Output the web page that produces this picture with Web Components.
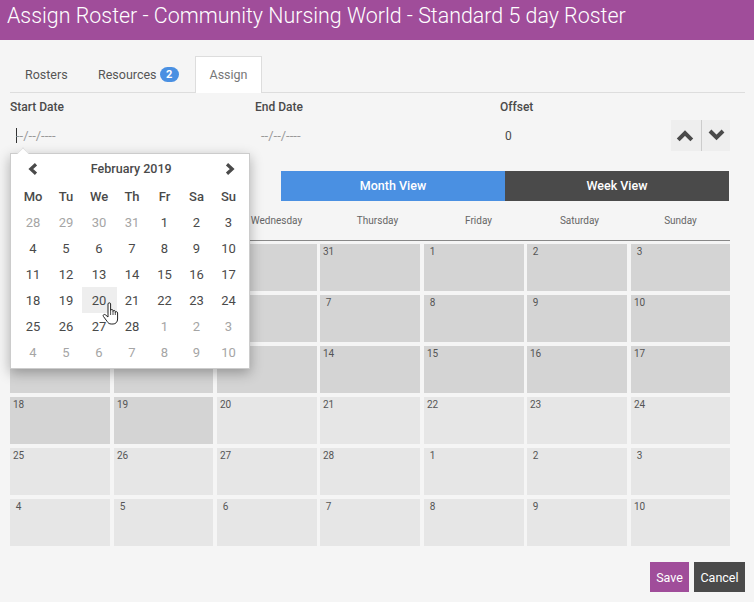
<!DOCTYPE html>
<html>
<head>
<meta charset="utf-8">
<title>Assign Roster</title>
<style>
    html, body { margin: 0; padding: 0; }
    body { background: #f5f5f5; font-family: Roboto, "Liberation Sans", sans-serif; color: #4a4a4a; }
</style>
</head>
<body>
<assign-roster></assign-roster>
<script>
const CHEVRON = {
    left: [10, 12, "8 1.2 2.8 6 8 10.8", 3.2],
    right: [10, 12, "2 1.2 7.2 6 2 10.8", 3.2],
    up: [18, 13, "2.2 10.8 9 4 15.8 10.8", 4],
    down: [17, 12, "2 2 8.5 8.4 15 2", 4]
};

function chevron(name) {
    const [w, h, points, stroke] = CHEVRON[name];
    return `<svg width="${w}" height="${h}" viewBox="0 0 ${w} ${h}" fill="none" stroke="#4a4a4a" stroke-width="${stroke}"><polyline points="${points}"/></svg>`;
}

class RosterHeader extends HTMLElement {
    connectedCallback() {
        this.attachShadow({ mode: "open" }).innerHTML = `
            <style>
                :host {
                    display: flex;
                    align-items: center;
                    box-sizing: border-box;
                    height: 40px;
                    padding: 0 0 9px 7px;
                    background: #a04d9a;
                    color: #fff;
                    font-weight: 300;
                    font-size: 21.4px;
                    white-space: nowrap;
                }
            </style>
            <slot></slot>
        `;
    }
}

class RosterTabs extends HTMLElement {
    connectedCallback() {
        this.attachShadow({ mode: "open" }).innerHTML = `
            <style>
                :host {
                    display: flex;
                    height: 36px;
                    margin: 16px 9px 0 10px;
                    border-bottom: 1px solid #ddd;
                    font-size: 12.5px;
                    color: #555;
                }
                div {
                    display: flex;
                    align-items: center;
                    box-sizing: border-box;
                    height: 37px;
                }
                .rosters { padding-left: 15px; width: 88px; }
                .resources { width: 97px; }
                .badge {
                    display: inline-block;
                    width: 19px;
                    height: 15px;
                    line-height: 15px;
                    margin-left: 3px;
                    border-radius: 8px;
                    background: #4a90e2;
                    color: #fff;
                    font-size: 11px;
                    font-weight: 700;
                    text-align: center;
                }
                .active {
                    justify-content: center;
                    width: 67px;
                    padding-bottom: 1px;
                    background: #fff;
                    border: 1px solid #ddd;
                    border-bottom: none;
                    color: #777;
                }
            </style>
            <div class="rosters">Rosters</div>
            <div class="resources">Resources<span class="badge">2</span></div>
            <div class="active">Assign</div>
        `;
    }
}

class DatePicker extends HTMLElement {
    connectedCallback() {
        const weekdays = ["Mo", "Tu", "We", "Th", "Fr", "Sa", "Su"];
        const days = [
            [28, 1], [29, 1], [30, 1], [31, 1], [1], [2], [3],
            [4], [5], [6], [7], [8], [9], [10],
            [11], [12], [13], [14], [15], [16], [17],
            [18], [19], [20], [21], [22], [23], [24],
            [25], [26], [27], [28], [1, 1], [2, 1], [3, 1],
            [4, 1], [5, 1], [6, 1], [7, 1], [8, 1], [9, 1], [10, 1]
        ];
        const cells = days.map(([n, other], i) =>
            `<span class="${other ? "other" : ""} ${i == 23 ? "hover" : ""}">${n}</span>`).join("");
        this.attachShadow({ mode: "open" }).innerHTML = `
            <style>
                :host {
                    position: absolute;
                    z-index: 5;
                    left: 0;
                    top: 53px;
                    box-sizing: border-box;
                    width: 240px;
                    height: 216px;
                    padding: 0 5px 0 5.5px;
                    background: #fff;
                    border: 1px solid #ccc;
                    box-shadow: 0 4px 12px rgba(0, 0, 0, .3);
                    font-size: 13px;
                    color: #4a4a4a;
                }
                .arrow {
                    position: absolute;
                    left: 7px;
                    top: -6px;
                    width: 9px;
                    height: 9px;
                    background: #fff;
                    border-top: 1px solid #ddd;
                    border-left: 1px solid #ddd;
                    transform: rotate(45deg) scale(.8);
                }
                .head {
                    display: flex;
                    justify-content: space-between;
                    align-items: center;
                    height: 29px;
                    padding: 0 9px 0 11px;
                    font-size: 12.5px;
                    font-weight: 500;
                }
                .head svg { display: block; }
                .grid {
                    display: grid;
                    grid-template-columns: repeat(4, 33px) repeat(3, 32px);
                    grid-auto-rows: 26px;
                    align-items: center;
                    justify-items: center;
                }
                .grid b { font-weight: 500; }
                .grid span {
                    display: flex;
                    align-items: center;
                    justify-content: center;
                    width: 100%;
                    height: 26px;
                }
                .other { color: #a5a5a5; }
                .grid .hover {
                    justify-self: start;
                    box-sizing: border-box;
                    width: 35px;
                    margin-left: -.4px;
                    padding-right: 1px;
                    background: #eee;
                }
                .hand { position: absolute; left: 91px; top: 148px; }
            </style>
            <div class="arrow"></div>
            <div class="head">${chevron("left")}<span>February 2019</span>${chevron("right")}</div>
            <div class="grid">
                ${weekdays.map(d => `<b>${d}</b>`).join("")}
                ${cells}
            </div>
            <svg class="hand" width="19" height="23" viewBox="0 0 19 23" fill="#fff" stroke="#222" stroke-width="1" stroke-linejoin="round">
                <path d="M6 2c0-1.6 2.6-1.6 2.6 0v6.5c0-1.3 2.4-1.3 2.4 0v1c0-1.3 2.3-1.3 2.3 0v1c0-1.2 2.3-1.2 2.3.5V17c0 3-2 5-4.5 5H9.2c-2 0-3.1-1-4-2.5L1.4 14.4c-.9-1.3.8-2.6 2-1.6L6 15z"/>
                <path d="M8.6 8.5V13M11 9.5V13M13.3 10.5V13" fill="none" stroke-width=".8"/>
            </svg>
        `;
    }
}

class DateField extends HTMLElement {
    connectedCallback() {
        const label = this.getAttribute("label");
        const caret = this.hasAttribute("focused");
        this.attachShadow({ mode: "open" }).innerHTML = `
            <style>
                :host {
                    display: block;
                    position: relative;
                    width: 245px;
                }
                label {
                    display: block;
                    height: 14px;
                    line-height: 14px;
                    font-size: 12px;
                    font-weight: 500;
                }
                .value {
                    display: flex;
                    align-items: center;
                    height: 31px;
                    margin-top: 6px;
                    padding-left: 6px;
                    font-size: 13px;
                    color: #999;
                }
                .caret {
                    width: 1px;
                    height: 15px;
                    margin-right: -1px;
                    background: #333;
                }
                .filled { color: #4a4a4a; padding-left: 5px; font-size: 12px; }
            </style>
            <label>${label}</label>
            <div class="value ${this.hasAttribute("filled") ? "filled" : ""}">${caret ? '<i class="caret"></i>' : ""}<slot></slot></div>
            <slot name="popup"></slot>
        `;
    }
}

class OffsetStepper extends HTMLElement {
    connectedCallback() {
        this.attachShadow({ mode: "open" }).innerHTML = `
            <style>
                :host {
                    display: flex;
                    align-self: flex-end;
                    height: 31px;
                    margin-left: -74px;
                    background: #eee;
                }
                div {
                    display: flex;
                    align-items: center;
                    justify-content: center;
                    box-sizing: border-box;
                    width: 29.5px;
                    height: 31px;
                }
                div + div { border-left: 1px solid #ccc; }
                svg { display: block; }
                .up svg { margin-right: 1px; }
                .down svg { margin: -2px 0 0 2px; }
            </style>
            <div class="up">${chevron("up")}</div>
            <div class="down">${chevron("down")}</div>
        `;
    }
}

class ViewSwitch extends HTMLElement {
    connectedCallback() {
        this.attachShadow({ mode: "open" }).innerHTML = `
            <style>
                :host {
                    display: grid;
                    grid-template-columns: 224px 224px;
                    height: 30px;
                    margin: 20px 0 0 281px;
                    color: #fff;
                    font-size: 12.5px;
                    font-weight: 500;
                }
                div {
                    display: flex;
                    align-items: center;
                    justify-content: center;
                    padding-bottom: 1px;
                }
                .month { background: #4a90e2; }
                .week { background: #4a4a4a; }
            </style>
            <div class="month">Month View</div>
            <div class="week">Week View</div>
        `;
    }
}

class MonthGrid extends HTMLElement {
    connectedCallback() {
        // Monday and Tuesday sit behind the open date picker, so they have no label here
        const names = ["", "", "Wednesday", "Thursday", "Friday", "Saturday", "Sunday"];
        // same for the first three cells of the first three rows
        const days = [
            "", "", "", 31, 1, 2, 3,
            "", "", "", 7, 8, 9, 10,
            "", "", "", 14, 15, 16, 17,
            18, 19, 20, 21, 22, 23, 24,
            25, 26, 27, 28, 1, 2, 3,
            4, 5, 6, 7, 8, 9, 10
        ];
        // the gutters in the calendar are not even, 3 or 4px
        const gutters = [4, 4, 3, 4, 3, 4, 0];
        this.attachShadow({ mode: "open" }).innerHTML = `
            <style>
                :host {
                    display: block;
                    width: 720px;
                    margin-left: 10px;
                }
                .names {
                    display: grid;
                    grid-template-columns: repeat(7, 101px);
                    align-items: center;
                    justify-items: center;
                    box-sizing: border-box;
                    height: 40px;
                    padding: 0 0 1px 14px;
                    border-bottom: 1px solid #888;
                    font-size: 10px;
                    color: #666;
                }
                .cells {
                    display: grid;
                    grid-template-columns: 104px 103px 103px 104px 103px 104px 99px;
                    grid-auto-rows: 47px;
                    row-gap: 4px;
                    margin-top: 3px;
                }
                .cells div {
                    background: #e6e6e6;
                    padding: 2px 0 0 3px;
                    font-size: 10px;
                    line-height: 12px;
                    color: #555;
                }
                .cells div.past { background: #d4d4d4; }
                .cells span {
                    display: inline-block;
                    min-width: 11px;
                    text-align: center;
                }
            </style>
            <div class="names">${names.map(n => `<span>${n}</span>`).join("")}</div>
            <div class="cells">${days.map((d, i) => `<div class="${i < 23 ? "past" : ""}" style="margin-right: ${gutters[i % 7]}px"><span>${d}</span></div>`).join("")}</div>
        `;
    }
}

class FormActions extends HTMLElement {
    connectedCallback() {
        this.attachShadow({ mode: "open" }).innerHTML = `
            <style>
                :host {
                    display: flex;
                    justify-content: flex-end;
                    gap: 5px;
                    margin: 16px 9px 0 0;
                }
                div {
                    display: flex;
                    align-items: center;
                    justify-content: center;
                    box-sizing: border-box;
                    height: 30px;
                    padding-top: 1px;
                    color: #fff;
                    font-size: 12.5px;
                }
                .save { width: 39px; background: #a04d9a; }
                .cancel { width: 51px; background: #4a4a4a; }
            </style>
            <div class="save">Save</div>
            <div class="cancel">Cancel</div>
        `;
    }
}

class AssignRoster extends HTMLElement {
    connectedCallback() {
        this.attachShadow({ mode: "open" }).innerHTML = `
            <style>
                :host { display: block; height: 602px; overflow: hidden; }
                .fields {
                    display: flex;
                    height: 51px;
                    margin: 7px 0 0 10px;
                    width: 720px;
                }
            </style>
            <roster-header>Assign Roster - Community Nursing World - Standard 5 day Roster</roster-header>
            <roster-tabs></roster-tabs>
            <div class="fields">
                <date-field label="Start Date" focused>
                    --/--/----
                    <date-picker slot="popup"></date-picker>
                </date-field>
                <date-field label="End Date">--/--/----</date-field>
                <date-field label="Offset" filled>0</date-field>
                <offset-stepper></offset-stepper>
            </div>
            <view-switch></view-switch>
            <month-grid></month-grid>
            <form-actions></form-actions>
        `;
    }
}

customElements.define("roster-header", RosterHeader);
customElements.define("roster-tabs", RosterTabs);
customElements.define("date-picker", DatePicker);
customElements.define("date-field", DateField);
customElements.define("offset-stepper", OffsetStepper);
customElements.define("view-switch", ViewSwitch);
customElements.define("month-grid", MonthGrid);
customElements.define("form-actions", FormActions);
customElements.define("assign-roster", AssignRoster);
</script>
</body>
</html>
